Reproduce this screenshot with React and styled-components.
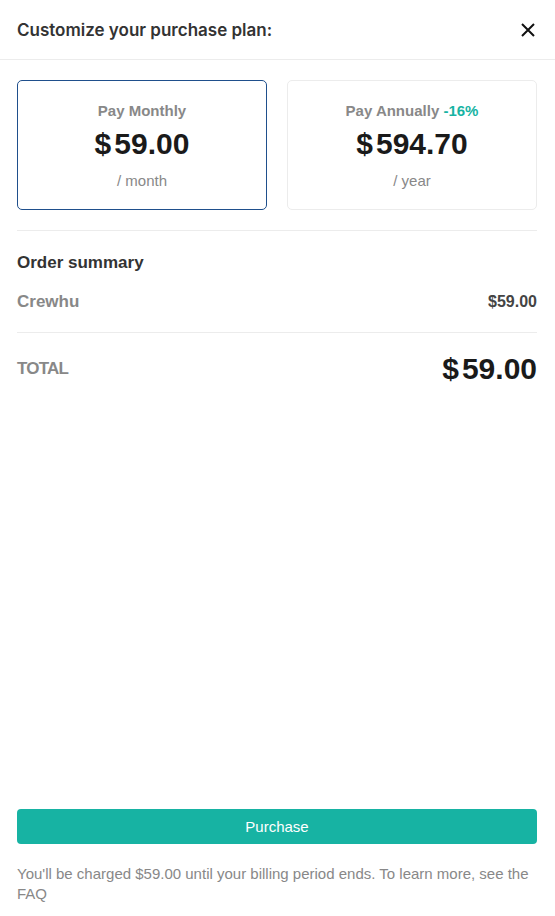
import styled, { createGlobalStyle } from "styled-components";

const GlobalStyle = createGlobalStyle`
  html, body { margin: 0; padding: 0; background: #fff; }
  body { font-family: "Liberation Sans", Arial, sans-serif; }
  #root { min-height: 100vh; display: flex; flex-direction: column; }
`;

const Modal = styled.div`
  flex: 1;
  display: flex;
  flex-direction: column;
  min-height: 916px;
`;

const Header = styled.header`
  height: 59px;
  display: flex;
  align-items: center;
  justify-content: space-between;
  padding: 0 17px;
  border-bottom: 1px solid #ececec;
`;

const Title = styled.h2`
  margin: 0;
  font-family: Inter, "Liberation Sans", sans-serif;
  font-size: 17px;
  font-weight: 600;
  color: #333;
`;

const CloseButton = styled.button`
  border: 0;
  background: none;
  padding: 0;
  width: 20px;
  height: 20px;
  display: flex;
  align-items: center;
  justify-content: center;
  cursor: pointer;
`;

const Body = styled.main`
  padding: 20px 18px 0 17px;
  display: flex;
  flex-direction: column;
`;

const Plans = styled.div`
  display: grid;
  grid-template-columns: 1fr 1fr;
  gap: 20px;
  padding-bottom: 20px;
  border-bottom: 1px solid #ececec;
`;

const PlanCard = styled.div`
  height: 130px;
  box-sizing: border-box;
  border: 1px solid ${(p) => (p.$active ? "#1f4f8c" : "#ececec")};
  border-radius: 5px;
  display: flex;
  flex-direction: column;
  align-items: center;
  padding-top: 21px;
`;

const PlanName = styled.div`
  font-size: 15px;
  font-weight: 700;
  color: #888;
  line-height: 18px;
`;

const Discount = styled.span`
  color: #17b3a3;
`;

const Price = styled.div`
  font-size: 30px;
  font-weight: 700;
  color: #1a1a1a;
  line-height: 34px;
  margin-top: 7px;
`;

const Dollar = styled.span`
  margin-right: 3px;
`;

const Period = styled.div`
  font-size: 15px;
  color: #888;
  line-height: 18px;
  margin-top: 11px;
`;

const SectionTitle = styled.h3`
  margin: 22px 0 0;
  font-size: 17px;
  font-weight: 700;
  color: #333;
  line-height: 20px;
`;

const Row = styled.div`
  display: flex;
  justify-content: space-between;
  align-items: center;
  padding: ${(p) => p.$pad || "0"};
  border-bottom: ${(p) => (p.$divider ? "1px solid #ececec" : "none")};
`;

const ItemName = styled.span`
  font-size: 17px;
  font-weight: 700;
  color: #888;
`;

const ItemPrice = styled.span`
  font-size: 16px;
  font-weight: 700;
  color: #444;
`;

const TotalLabel = styled.span`
  font-size: 17px;
  font-weight: 700;
  color: #888;
  letter-spacing: -0.8px;
`;

const TotalPrice = styled.span`
  font-size: 30px;
  font-weight: 700;
  color: #1a1a1a;
`;

const Footer = styled.footer`
  margin-top: auto;
  padding: 0 18px 12px 17px;
`;

const PurchaseButton = styled.button`
  width: 100%;
  height: 35px;
  border: 0;
  border-radius: 4px;
  background: #17b3a3;
  color: #fff;
  font-family: "Liberation Sans", Arial, sans-serif;
  font-size: 15px;
  cursor: pointer;
`;

const Note = styled.p`
  margin: 20px 0 0;
  font-size: 15px;
  line-height: 20px;
  color: #888;
`;

export default function App() {
  return (
    <>
      <GlobalStyle />
      <Modal>
        <Header>
          <Title>Customize your purchase plan:</Title>
          <CloseButton aria-label="close">
            <svg width="16" height="16" viewBox="0 0 16 16">
              <path d="M2 2 L14 14 M14 2 L2 14" stroke="#111" strokeWidth="2" />
            </svg>
          </CloseButton>
        </Header>
        <Body>
          <Plans>
            <PlanCard $active>
              <PlanName>Pay Monthly</PlanName>
              <Price><Dollar>$</Dollar>59.00</Price>
              <Period>/ month</Period>
            </PlanCard>
            <PlanCard>
              <PlanName>Pay Annually <Discount>-16%</Discount></PlanName>
              <Price><Dollar>$</Dollar>594.70</Price>
              <Period>/ year</Period>
            </PlanCard>
          </Plans>
          <SectionTitle>Order summary</SectionTitle>
          <Row $pad="19px 0 20px" $divider>
            <ItemName>Crewhu</ItemName>
            <ItemPrice>$59.00</ItemPrice>
          </Row>
          <Row $pad="19px 0 21px">
            <TotalLabel>TOTAL</TotalLabel>
            <TotalPrice><Dollar>$</Dollar>59.00</TotalPrice>
          </Row>
        </Body>
        <Footer>
          <PurchaseButton>Purchase</PurchaseButton>
          <Note>You'll be charged $59.00 until your billing period ends. To learn more, see the FAQ</Note>
        </Footer>
      </Modal>
    </>
  );
}
